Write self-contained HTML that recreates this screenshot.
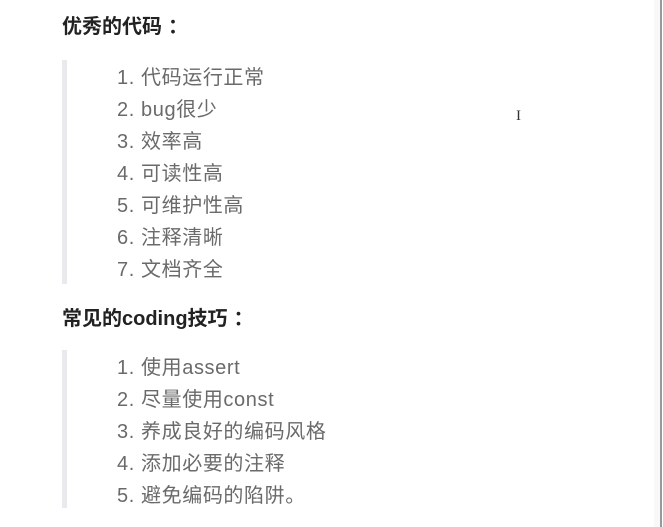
<!DOCTYPE html>
<html><head><meta charset="utf-8"><style>
body{margin:0;width:663px;height:527px;background:#fff;position:relative;overflow:hidden;font-family:"Liberation Sans","Noto Sans CJK SC",sans-serif}
.h{position:absolute;left:62px;font-size:20px;font-weight:bold;color:#222;line-height:24px;white-space:nowrap}
.c{margin-left:6px}
.bar{position:absolute;left:62px;width:5px;background:#eaeaee}
.li{position:absolute;left:117px;font-size:20px;color:#6a6a6a;line-height:32px;white-space:nowrap;letter-spacing:0.6px}
.vr{position:absolute;left:660px;top:0;width:2px;height:527px;background:#999}
.vr2{position:absolute;left:654px;top:0;width:6px;height:527px;background:#f8f8f8}
</style></head><body>
<div class="h" style="top:15px">优秀的代码<span class="c">：</span></div>
<div class="bar" style="top:60px;height:224px"></div>
<div class="li" style="top:62px">1. 代码运行正常</div>
<div class="li" style="top:94px">2. bug很少</div>
<div class="li" style="top:126px">3. 效率高</div>
<div class="li" style="top:158px">4. 可读性高</div>
<div class="li" style="top:190px">5. 可维护性高</div>
<div class="li" style="top:222px">6. 注释清晰</div>
<div class="li" style="top:254px">7. 文档齐全</div>
<div class="h" style="top:307px">常见的coding技巧<span class="c">：</span></div>
<div class="bar" style="top:350px;height:158px"></div>
<div class="li" style="top:352px">1. 使用assert</div>
<div class="li" style="top:384px">2. 尽量使用const</div>
<div class="li" style="top:416px">3. 养成良好的编码风格</div>
<div class="li" style="top:448px">4. 添加必要的注释</div>
<div class="li" style="top:480px">5. 避免编码的陷阱。</div>
<div style="position:absolute;left:516px;top:108px;font-size:15px;color:#333;font-family:'Liberation Serif',serif">I</div>
<div class="vr2"></div><div class="vr"></div>
</body></html>
